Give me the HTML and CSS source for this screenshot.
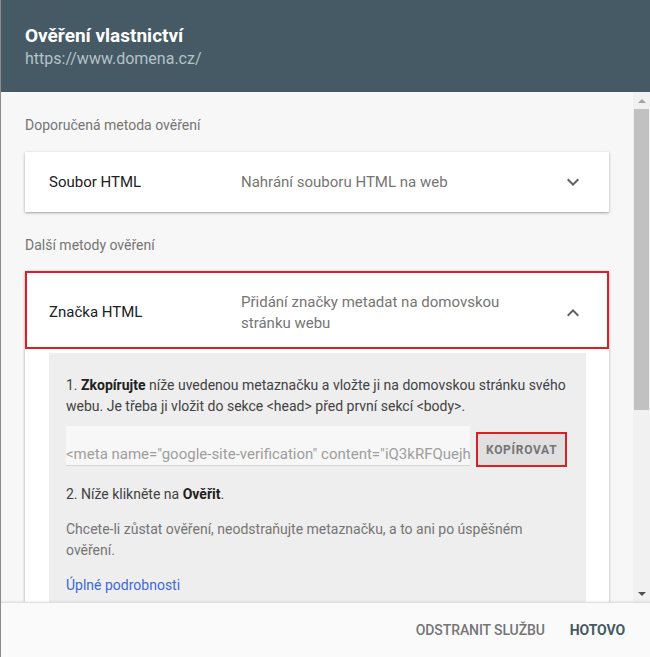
FILE: index.html
```html
<!DOCTYPE html>
<html lang="cs">
<head>
<meta charset="utf-8">
<title>Ověření vlastnictví</title>
<link rel="stylesheet" href="styles.css">
</head>
<body>
<div class="dialog">
  <header class="head">
    <div class="head-title">Ověření vlastnictví</div>
    <div class="head-sub">https://www.domena.cz/</div>
  </header>
  <div class="main">
    <div class="content">
      <div class="section-label first">Doporučená metoda ověření</div>
      <div class="card">
        <div class="card-head">
          <div class="card-title">Soubor HTML</div>
          <div class="card-desc">Nahrání souboru HTML na web</div>
          <div class="card-icon">
            <svg width="24" height="24" viewBox="0 0 24 24"><path d="M16.59 8.59L12 13.17 7.41 8.59 6 10l6 6 6-6z" fill="#616161"/></svg>
          </div>
        </div>
      </div>
      <div class="section-label">Další metody ověření</div>
      <div class="card open">
        <div class="card-head marked">
          <div class="card-title">Značka HTML</div>
          <div class="card-desc">Přidání značky metadat na domovskou stránku webu</div>
          <div class="card-icon">
            <svg width="24" height="24" viewBox="0 0 24 24"><path d="M12 8l-6 6 1.41 1.41L12 10.83l4.59 4.58L18 14z" fill="#616161"/></svg>
          </div>
        </div>
        <div class="panel">
          <p class="step">1. <b>Zkopírujte</b> níže uvedenou metaznačku a vložte ji na domovskou stránku svého webu. Je třeba ji vložit do sekce &lt;head&gt; před první sekcí &lt;body&gt;.</p>
          <div class="copy-row">
            <div class="meta-field">&lt;meta name="google-site-verification" content="iQ3kRFQuejh" /&gt;</div>
            <div class="copy-wrap"><button class="copy-btn">KOPÍROVAT</button></div>
          </div>
          <p class="step step2">2. Níže klikněte na <b>Ověřit</b>.</p>
          <p class="note">Chcete-li zůstat ověření, neodstraňujte metaznačku, a to ani po úspěšném ověření.</p>
          <a class="link" href="#">Úplné podrobnosti</a>
        </div>
      </div>
    </div>
    <div class="scrollbar">
      <div class="arrow up"></div>
      <div class="track"><div class="thumb"></div></div>
      <div class="arrow down"></div>
    </div>
  </div>
  <footer class="foot">
    <button class="fbtn">ODSTRANIT SLUŽBU</button>
    <button class="fbtn primary">HOTOVO</button>
  </footer>
</div>
</body>
</html>
```

FILE: styles.css
```css
* { box-sizing: border-box; }
html, body { margin: 0; padding: 0; }
body {
  font-family: Roboto, "Liberation Sans", Arial, sans-serif;
  background: #fafafa;
}
.dialog {
  width: 650px;
  height: 657px;
  display: flex;
  flex-direction: column;
  border-left: 1px solid #8d8d8d;
  overflow: hidden;
}
.head {
  background: #455a64;
  height: 92px;
  padding: 24px 24px 0 24px;
  flex: none;
}
.head-title {
  color: #ffffff;
  font-size: 19px;
  font-weight: 700;
  line-height: 24px;
}
.head-sub {
  color: #b4c2c9;
  font-size: 16px;
  line-height: 22px;
}
.main {
  flex: 1;
  min-height: 0;
  display: flex;
  background: #f7f7f7;
}
.content {
  flex: 1;
  min-width: 0;
  overflow: hidden;
  padding: 0 24px 0 24px;
}
.section-label {
  color: #757575;
  font-size: 14px;
  line-height: 20px;
  margin: 23px 0 16px;
}
.section-label.first { margin-top: 23px; margin-bottom: 17px; }
.card {
  background: #ffffff;
  box-shadow: 0 1px 3px rgba(0,0,0,0.28), 0 1px 1px rgba(0,0,0,0.08);
}
.card-head {
  display: flex;
  align-items: center;
  min-height: 60px;
  padding: 0 12px 0 24px;
}
.card-head.marked {
  min-height: 78px;
  padding-top: 5px;
  outline: 2px solid #dc1f26;
  outline-offset: -2px;
}
.card-title {
  width: 192px;
  flex: none;
  font-size: 15px;
  color: #212121;
  line-height: 21px;
}
.card-desc {
  flex: 1;
  font-size: 15px;
  color: #757575;
  line-height: 21px;
  padding-right: 16px;
}
.card-icon {
  width: 48px;
  flex: none;
  display: flex;
  justify-content: center;
}
.card-icon svg { display: block; }
.card.open { padding-bottom: 20px; }
.panel {
  margin: 4px 23px 0 24px;
  background: #eeeeee;
  padding: 22px 17px 20px 17px;
  font-size: 14px;
  line-height: 21px;
  color: #424242;
}
.panel p { margin: 0; }
.panel b { font-weight: 700; color: #212121; }
.copy-row {
  display: flex;
  align-items: flex-end;
  margin-top: 9px;
  gap: 6px;
}
.meta-field {
  width: 404px;
  height: 40px;
  background: #f7f7f7;
  border-bottom: 1px solid #d5d5d5;
  color: #9e9e9e;
  font-size: 15px;
  line-height: 20px;
  padding-top: 18px;
  white-space: nowrap;
  overflow: hidden;
}
.copy-wrap {
  border: 2px solid #dc1f26;
  padding: 0;
  margin-bottom: -1px;
}
.copy-btn {
  display: block;
  border: none;
  background: #e0e0e0;
  color: #757575;
  font-family: inherit;
  font-size: 12px;
  font-weight: 700;
  letter-spacing: 0.7px;
  height: 31px;
  padding: 0 8px;
  margin: 0;
}
.step2 { margin-top: 18px !important; }
.note { color: #757575; margin-top: 14px !important; }
.link {
  display: inline-block;
  margin-top: 14px;
  color: #3f67dc;
  text-decoration: none;
}
.scrollbar {
  width: 17px;
  flex: none;
  background: #f1f1f1;
  display: flex;
  flex-direction: column;
  align-items: center;
}
.arrow {
  width: 17px;
  height: 17px;
  flex: none;
  display: flex;
  align-items: center;
  justify-content: center;
}
.arrow::before {
  content: "";
  width: 0;
  height: 0;
  border-left: 4px solid transparent;
  border-right: 4px solid transparent;
}
.arrow.up::before { border-bottom: 4px solid #a3a3a3; }
.arrow.down::before { border-top: 4px solid #505050; }
.track { flex: 1; width: 100%; padding: 0 1px; }
.thumb {
  height: 301px;
  background: #c1c1c1;
}
.foot {
  flex: none;
  height: 55px;
  background: #fafafa;
  border-top: 1px solid #e0e0e0;
  box-shadow: 0 -1px 2px rgba(0,0,0,0.06);
  display: flex;
  justify-content: flex-end;
  align-items: center;
  gap: 9px;
  padding: 0 17px 0 0;
}
.fbtn {
  border: none;
  background: none;
  font-family: inherit;
  font-size: 14px;
  font-weight: 500;
  color: #757575;
  padding: 8px 8px;
  letter-spacing: -0.1px;
}
.fbtn.primary { color: #455a64; font-weight: 700; }
```
